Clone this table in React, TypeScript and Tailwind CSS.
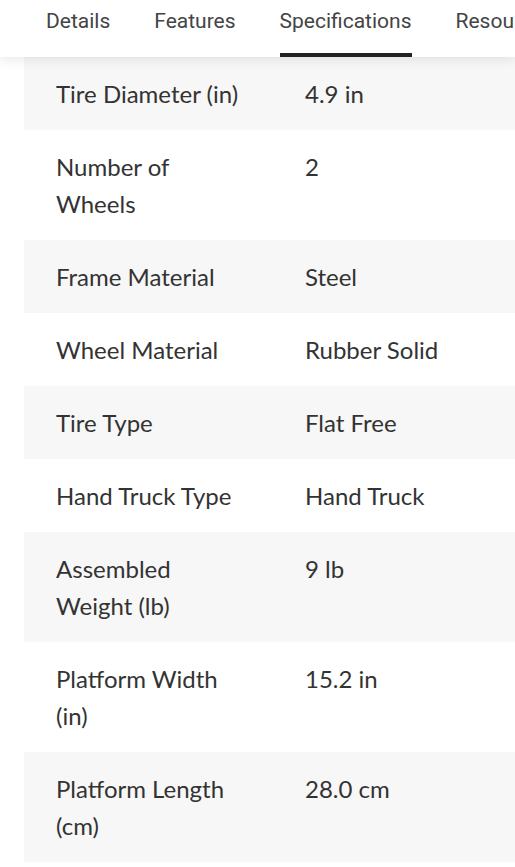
const tabs = ["Details", "Features", "Specifications", "Resources"];

const specs: [string, string][] = [
  ["Tire Diameter (in)", "4.9 in"],
  ["Number of Wheels", "2"],
  ["Frame Material", "Steel"],
  ["Wheel Material", "Rubber Solid"],
  ["Tire Type", "Flat Free"],
  ["Hand Truck Type", "Hand Truck"],
  ["Assembled Weight (lb)", "9 lb"],
  ["Platform Width (in)", "15.2 in"],
  ["Platform Length (cm)", "28.0 cm"],
];

export default function App() {
  return (
    <div className="min-h-[867px] w-[515px] overflow-hidden bg-white">
      {/* Tab strip */}
      <div className="relative z-10 flex h-[57px] whitespace-nowrap bg-white pl-6 font-['Roboto',sans-serif] text-[21px] leading-[25px] text-[#444] shadow-[0_4px_10px_rgba(0,0,0,0.08)]">
        {tabs.map((t) => (
          <button
            key={t}
            type="button"
            className={`mx-[22px] shrink-0 border-b-4 pt-[9px] pb-[19px] ${
              t === "Specifications" ? "border-[#222]" : "border-transparent"
            }`}
          >
            {t}
          </button>
        ))}
      </div>

      {/* Spec table */}
      <div className="ml-6 font-['Lato',sans-serif] text-[24px] leading-[37px] text-[#333]">
        {specs.map(([label, value], i) => (
          <div
            key={label}
            className={`flex py-[18px] pl-8 ${i % 2 === 0 ? "bg-[#f7f7f7]" : "bg-white"}`}
          >
            <div className="w-[194px] shrink-0">{label}</div>
            <div className="ml-[55px]">{value}</div>
          </div>
        ))}
      </div>
    </div>
  );
}
